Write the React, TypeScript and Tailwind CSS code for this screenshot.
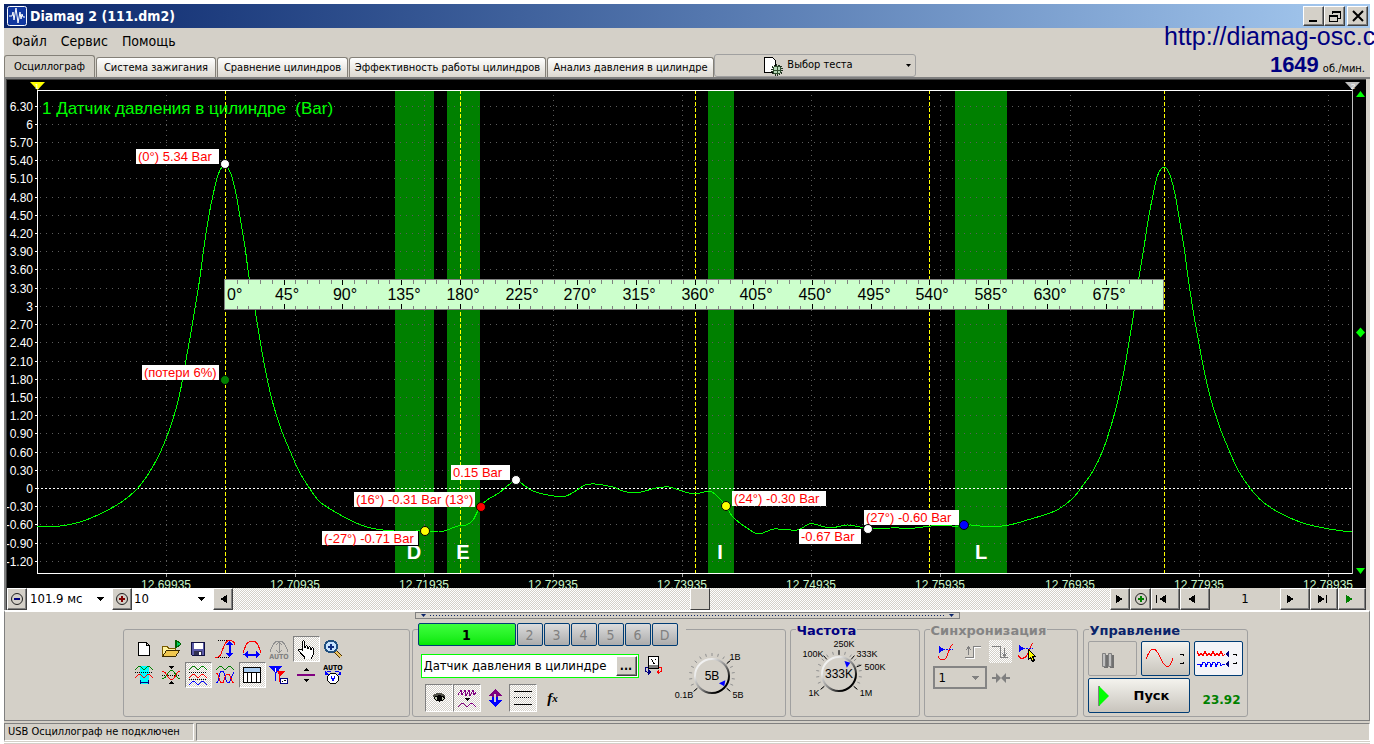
import React from 'react';
import clsx from 'clsx';

const UI_FONT = "font-['DejaVu_Sans_Condensed','DejaVu_Sans',sans-serif]";
const DITHER = 'bg-[repeating-conic-gradient(#ffffff_0_25%,#d4d0c8_0_50%)] bg-[length:2px_2px]';
const RAISED =
  'bg-[#d4d0c8] border border-t-white border-l-white border-r-[#404040] border-b-[#404040] shadow-[inset_-1px_-1px_0_#808080]';

/* ---------- chart data ---------- */

const ZERO_Y = 488;
const PX_PER_BAR = 60.7;
const LEFT = 37;
const RIGHT = 1352;
const TOP = 90;
const BOTTOM = 573;

const yTicks = Array.from({ length: 26 }, (_, i) => Math.round((6.3 - i * 0.3) * 100) / 100);
const xTicks = Array.from({ length: 10 }, (_, i) => ({
  x: Math.floor(166 + i * 129.15),
  label: (12.69935 + i * 0.01).toFixed(5),
}));
const bands = [
  { x: 395, w: 39, letter: 'D', lx: 414 },
  { x: 447, w: 33, letter: 'E', lx: 463 },
  { x: 708, w: 26, letter: 'I', lx: 720 },
  { x: 955, w: 52, letter: 'L', lx: 981 },
];
const strokes = [225, 460, 695, 929, 1164];

const notes = [
  { x: 136, y: 149, w: 83, text: '(0°) 5.34 Bar' },
  { x: 142, y: 365, w: 77, text: '(потери 6%)' },
  { x: 451, y: 465, w: 59, text: '0.15 Bar' },
  { x: 354, y: 492, w: 121, text: '(16°) -0.31 Bar (13°)' },
  { x: 322, y: 531, w: 96, text: '(-27°) -0.71 Bar', outlined: true },
  { x: 732, y: 491, w: 94, text: '(24°) -0.30 Bar' },
  { x: 799, y: 529, w: 62, text: '-0.67 Bar' },
  { x: 864, y: 510, w: 95, text: '(27°) -0.60 Bar' },
];

const dots = [
  { x: 225, y: 164, fill: '#ffffff' },
  { x: 225, y: 380, fill: '#008000' },
  { x: 516, y: 480, fill: '#ffffff' },
  { x: 481, y: 507, fill: '#ff0000' },
  { x: 425, y: 531, fill: '#ffff00' },
  { x: 726, y: 506, fill: '#ffff00' },
  { x: 868, y: 529, fill: '#ffffff' },
  { x: 964, y: 525, fill: '#0000ff' },
];

const trace: [number, number][] = [
  [37, 526], [60, 526], [80, 522], [100, 514], [120, 503], [135, 491], [147, 476], [157, 459], [166, 439],
  [173, 419], [179, 397], [183, 377], [186, 360], [191, 332], [196, 302], [200, 277], [204, 247], [209, 215],
  [213, 195], [218, 175], [222, 167], [225, 165], [228, 168], [232, 177], [236, 194], [240, 217], [245, 247],
  [249, 277], [255, 310], [260, 340], [265, 368], [272, 400], [281, 429], [290, 451], [299, 471], [310, 489],
  [320, 502], [337, 513], [354, 522], [371, 528], [394, 531], [423, 531], [439, 532], [447, 530], [458, 526],
  [466, 525], [473, 520], [480, 507], [487, 500], [499, 493], [506, 487], [516, 480], [521, 483], [533, 491],
  [554, 496], [566, 496], [577, 490], [585, 485], [595, 484], [613, 487], [623, 491], [635, 493], [645, 491],
  [656, 488], [669, 487], [682, 491], [695, 494], [709, 491], [716, 495], [726, 506], [733, 517], [747, 528],
  [759, 534], [774, 529], [797, 530], [809, 524], [818, 525], [830, 528], [847, 525], [860, 527], [868, 529],
  [891, 528], [915, 528], [931, 526], [959, 526], [971, 525], [990, 527], [1009, 525], [1024, 521],
  [1055, 511], [1072, 499], [1081, 488], [1093, 471], [1103, 450], [1111, 426], [1118, 400], [1126, 360],
  [1135, 305], [1139, 277], [1144, 247], [1149, 215], [1153, 195], [1157, 177], [1161, 169], [1164, 167],
  [1167, 169], [1171, 178], [1175, 194], [1179, 217], [1184, 247], [1188, 277], [1193, 310], [1198, 338],
  [1204, 370], [1211, 400], [1220, 428], [1229, 450], [1238, 470], [1250, 488], [1263, 502], [1280, 513],
  [1303, 523], [1329, 529], [1352, 532],
];

function smooth(p: [number, number][]) {
  let d = `M${p[0][0]} ${p[0][1]}`;
  for (let i = 0; i < p.length - 1; i++) {
    const a = p[Math.max(i - 1, 0)];
    const b = p[i];
    const c = p[i + 1];
    const e = p[Math.min(i + 2, p.length - 1)];
    d += `C${b[0] + (c[0] - a[0]) / 6} ${b[1] + (c[1] - a[1]) / 6} ${c[0] - (e[0] - b[0]) / 6} ${c[1] - (e[1] - b[1]) / 6} ${c[0]} ${c[1]}`;
  }
  return d;
}

function Chart() {
  return (
    <svg
      viewBox="7 80 1359 508"
      className="block w-full h-auto bg-black font-['Liberation_Sans',Arial,sans-serif]"
      role="img"
      aria-label="Датчик давления в цилиндре (Bar)"
    >
      {bands.map((b) => (
        <rect key={b.letter} x={b.x} y={TOP + 1} width={b.w} height={BOTTOM - TOP - 1} fill="#008000" />
      ))}

      {/* grid */}
      <g stroke="#5c5c5c" shapeRendering="crispEdges">
        {yTicks.filter((v) => v !== 0).map((v) => {
          const y = Math.round(ZERO_Y - v * PX_PER_BAR) + 0.5;
          return <line key={v} x1={LEFT + 3} x2={RIGHT} y1={y} y2={y} strokeDasharray="1 5" />;
        })}
        {xTicks.map((t) => (
          <line key={t.label} x1={t.x + 0.5} x2={t.x + 0.5} y1={TOP + 5} y2={BOTTOM} strokeDasharray="1 4" />
        ))}
      </g>

      {/* y scale */}
      {yTicks.map((v) => {
        const y = Math.round(ZERO_Y - v * PX_PER_BAR);
        return (
          <g key={v}>
            <text x={33} y={y + 5} fontSize={12} fill="#ffffff" textAnchor="end">
              {Number.isInteger(v) ? v : v.toFixed(2)}
            </text>
            <rect x={35} y={y} width={2} height={1} fill="#ffffff" />
          </g>
        );
      })}

      {/* x scale */}
      {xTicks.map((t) => (
        <g key={t.label}>
          <rect x={t.x} y={BOTTOM + 1} width={1} height={3} fill="#a0a0a0" />
          <text x={t.x} y={589} fontSize={12} fill="#c8f5c8" textAnchor="middle">
            {t.label}
          </text>
        </g>
      ))}

      <g shapeRendering="crispEdges">
        {strokes.map((x) => (
          <line key={x} x1={x + 0.5} x2={x + 0.5} y1={TOP} y2={BOTTOM} stroke="#ffff00" strokeDasharray="4 2" />
        ))}
        <line x1={LEFT} x2={RIGHT} y1={ZERO_Y + 0.5} y2={ZERO_Y + 0.5} stroke="#ffffff" strokeDasharray="2 2" />
        <path d={`M${LEFT + 0.5} ${BOTTOM + 0.5}V${TOP + 0.5}H${RIGHT}M${LEFT} ${BOTTOM + 0.5}H${RIGHT}`} stroke="#ffffff" fill="none" />
        <path d={`M${RIGHT + 0.5} ${TOP}V${BOTTOM + 1}`} stroke="#c0c0c0" />
        <path d={smooth(trace)} stroke="#00ff00" fill="none" />
      </g>

      <text x={42} y={114} fontSize={17} fill="#00ff00">
        {'1 Датчик давления в цилиндре\u00a0 (Bar)'}
      </text>

      {/* crank angle ruler */}
      <g shapeRendering="crispEdges">
        <rect x={224.5} y={279.5} width={939} height={30} fill="#ccffcc" stroke="#808080" />
        {Array.from({ length: 79 }, (_, i) => i + 1).map((i) => {
          const major = i % 5 === 0;
          const x = Math.round(225 + i * 11.74);
          return (
            <path
              key={i}
              d={major ? `M${x + 0.5} 280v5M${x + 0.5} 304v5` : `M${x + 0.5} 280v4M${x + 0.5} 306v3`}
              stroke={major ? '#000000' : '#808080'}
            />
          );
        })}
      </g>
      {Array.from({ length: 16 }, (_, i) => (
        <text
          key={i}
          x={i === 0 ? 227 : Math.round(228 + i * 58.7)}
          y={300}
          fontSize={16}
          fill="#000000"
          textAnchor={i === 0 ? 'start' : 'middle'}
        >
          {i * 45}°
        </text>
      ))}

      {bands.map((b) => (
        <text key={b.letter} x={b.lx} y={559} fontSize={20} fontWeight={700} fill="#ffffff" textAnchor="middle">
          {b.letter}
        </text>
      ))}

      {notes.map((n) => (
        <g key={n.text}>
          {n.outlined && <rect x={n.x} y={n.y} width={n.w + 1} height={15} fill="#000000" />}
          <rect x={n.x} y={n.y} width={n.w} height={n.outlined ? 14 : 15} fill="#ffffff" />
          <text x={n.x + 2} y={n.y + 12} fontSize={13} fill="#ff0000">
            {n.text}
          </text>
        </g>
      ))}
      {dots.map((d) => (
        <circle key={`${d.x}-${d.y}`} cx={d.x} cy={d.y} r={4.5} fill={d.fill} stroke="#000000" />
      ))}

      {/* markers */}
      <path d="M30 82H45L37.5 90z" fill="#ffff00" />
      <text x={37} y={89} fontSize={8} fill="#ffffff" textAnchor="middle">1</text>
      <path d="M1345 82H1360L1352.5 90z" fill="#c0c0c0" />
      <text x={1353} y={89} fontSize={8} fill="#ffffff" textAnchor="middle">2</text>
      <path d="M1356 97L1360.500 91L1365 97z" fill="#00ff00" />
      <path d="M1360.500 327.500L1365 332.500L1360.500 337.500L1356 332.500z" fill="#00ff00" />
      <path d="M1356 568H1365L1360.500 574z" fill="#00ff00" />
    </svg>
  );
}

/* ---------- icons, 20x20 pixel art ---------- */

function Ico({ children, size = 'w-5 h-5' }: { children: React.ReactNode; size?: string }) {
  return (
    <svg viewBox="0 0 20 20" className={clsx(size, 'shrink-0')} fill="none" shapeRendering="crispEdges">
      {children}
    </svg>
  );
}

const WAVE = 'c2 0 2-3 4.500-3s2.500 3 4.500 3 2-3 4.500-3 2.500 3 4.500 3';

const toolIcons: { label: string; on?: boolean; art: React.ReactNode }[] = [
  {
    label: 'Новый',
    art: <path d="M4.500 3.500h8l3 3v10h-11z M12.500 3.500v3h3" fill="#fff" stroke="#000" />,
  },
  {
    label: 'Открыть',
    art: (
      <>
        <path d="M1.500 17.500v-10h5l1 2h7v3" fill="#fff3a0" stroke="#7a5a00" />
        <path d="M1.500 17.500l4-6h13l-4 6z" fill="#f0c850" stroke="#3a2a00" />
        <path d="M14 1v8" stroke="#006000" />
        <path d="M15 1l5 4-5 4z" fill="#00d060" stroke="#006000" />
      </>
    ),
  },
  {
    label: 'Сохранить',
    art: (
      <>
        <path d="M3.500 3.500h13v13h-12l-1-1z" fill="#5a5aa8" stroke="#101040" />
        <rect x="6" y="4" width="9" height="6" fill="#fff" />
        <rect x="6" y="12" width="8" height="4" fill="#303050" />
        <rect x="11" y="13" width="2" height="3" fill="#fff" />
      </>
    ),
  },
  {
    label: 'Масштаб по вертикали',
    art: (
      <>
        <path d="M3 1.500h12M3 18.500h11" stroke="#000" strokeDasharray="1 1" />
        <path d="M0 18.500c6 0 6-4 8-9s3-8 6-8 5 1 6 4" stroke="#f00" />
        <path d="M14.500 4v13" stroke="#00f" strokeWidth="2" />
        <path d="M11 6l3.500-4 3.500 4zM11 14l3.500 4 3.500-4z" fill="#00f" />
      </>
    ),
  },
  {
    label: 'Масштаб по горизонтали',
    art: (
      <>
        <path d="M1.500 14v-3c2 0 1-9 8.500-9s6.500 9 8.500 9v3" stroke="#f00" />
        <path d="M3 15.500h14" stroke="#00f" strokeWidth="2" />
        <path d="M6 12l-4.500 3.500L6 19zM14 12l4.500 3.500L14 19z" fill="#00f" />
      </>
    ),
  },
  {
    label: 'Автомасштаб',
    art: (
      <>
        <path d="M1.500 13v-3c2 0 1-8 8.500-8s6.500 8 8.500 8v3M10 4v9M7 6l3-3 3 3M7 11l3 3 3-3" stroke="#909090" />
        <text x="10" y="20" fontSize="7" fontWeight="700" fill="#808080" textAnchor="middle" shapeRendering="auto">AUTO</text>
      </>
    ),
  },
  {
    label: 'Рука',
    on: true,
    art: (
      <path
        d="M6.500 11.500v-9l1-1 1 1v6h1v-1l1-1 1 1v2h1v-1l1-1 1 1v2h1v-1l1-1 1 1v6l-2 3v1.500h-7v-2l-3-3-3-3.500v-1.500h2z"
        fill="#fff"
        stroke="#000"
      />
    ),
  },
  {
    label: 'Лупа',
    art: (
      <>
        <path d="M12 12l6 6" stroke="#4a3000" strokeWidth="4" />
        <path d="M12 12l6 6" stroke="#e8c060" strokeWidth="2" />
        <circle cx="8" cy="7.500" r="6" fill="#c8e4ff" stroke="#205080" strokeWidth="2" />
        <path d="M8 4.500v6M5 7.500h6" stroke="#103080" strokeWidth="2" />
      </>
    ),
  },
  {
    label: 'Фильтр',
    art: (
      <>
        <rect x="6" y="1" width="9" height="18" fill="#0ff" />
        <path d={`M1 4.500${WAVE}`} stroke="#008000" />
        <path d="M1 7.500h18" stroke="#000" strokeDasharray="1 1" />
        <path d={`M1 12.500${WAVE}`} stroke="#f00" />
        <path d="M6 17.500h9M6.500 15v4M14.500 15v4" stroke="#000080" />
      </>
    ),
  },
  {
    label: 'Сжать',
    art: (
      <>
        <path d="M7 1h7l-3.500 3zM7 19h7l-3.500-3z" fill="#000" />
        <path d="M1 10.500h18" stroke="#000" strokeDasharray="1 1" />
        <path d="M1 13.500c5 1 5-8 9.500-8s4 9 8.500 8" stroke="#008000" />
        <path d="M1 6.500c5-1 5 8 9.500 8s4-9 8.500-8" stroke="#f00" />
      </>
    ),
  },
  {
    label: 'Раздельно',
    on: true,
    art: (
      <>
        <path d={`M1 4.500${WAVE}`} stroke="#008000" />
        <path d="M1 7.500h18M1 14.500h18" stroke="#000" strokeDasharray="1 1" />
        <path d={`M1 12.500${WAVE}`} stroke="#f00" />
        <path d={`M1 19.500${WAVE}`} stroke="#00f" />
      </>
    ),
  },
  {
    label: 'Вместе',
    art: (
      <>
        <path d={`M1 4.500${WAVE}`} stroke="#008000" />
        <path d="M1 18c4 0 2-12 6-12s3 12 6 12 3-7 6-11" stroke="#00f" />
        <path d="M1 8c3 0 3 10 6 10s2-9 6-9 2 9 6 9" stroke="#f00" />
      </>
    ),
  },
  {
    label: 'Таблица',
    on: true,
    art: (
      <>
        <rect x="1.500" y="2.500" width="17" height="15" fill="#fff" stroke="#000" />
        <rect x="2" y="3" width="16" height="4" fill="#a6caf0" />
        <path d="M1 7.500h18M5.500 7v10M9.500 7v10M14.500 7v10" stroke="#000" />
      </>
    ),
  },
  {
    label: 'Маркеры',
    art: (
      <>
        <path d="M0 1h13l-6 8z" fill="#00f" />
        <path d="M6.500 8v8" stroke="#00f" />
        <path d="M8 6h8l-5 6z" fill="#f00" />
        <path d="M10.500 10v7" stroke="#f00" />
        <path d="M5.500 3.500h1v3" stroke="#fff" />
        <rect x="11.500" y="13.500" width="7" height="5" fill="#fff" stroke="#000080" />
        <path d="M13 16.500h1M15 15.500h2" stroke="#000" />
      </>
    ),
  },
  {
    label: 'Линия нуля',
    art: (
      <>
        <path d="M7 6l3-3 3 3zM7 14l3 3 3-3z" fill="#000" />
        <rect x="1" y="9" width="18" height="2" fill="#800080" />
      </>
    ),
  },
  {
    label: 'Автоподбор',
    art: (
      <>
        <text x="10" y="5" fontSize="7" fontWeight="700" fill="#000" textAnchor="middle" shapeRendering="auto">AUTO</text>
        <path d="M3 7.500c4-2 10-2 14 0" stroke="#00f" />
        <path d="M2 6v4h4zM18 6v4h-4z" fill="#00f" />
        <circle cx="10" cy="13.500" r="5.500" fill="#fff" stroke="#000" />
        <path d="M8 11l2 5 2-5" stroke="#00f" />
      </>
    ),
  },
];

/* ---------- pieces ---------- */

function RowButton({ label, className, children }: { label: string; className: string; children: React.ReactNode }) {
  return (
    <button aria-label={label} className={clsx(RAISED, 'flex h-[22px] shrink-0 items-center justify-center', className)}>
      {children}
    </button>
  );
}

function Tri({ dir, fill = '#000000', bar = false }: { dir: 'l' | 'r'; fill?: string; bar?: boolean }) {
  return (
    <svg viewBox="0 0 12 10" className="w-3 h-[10px]" shapeRendering="crispEdges">
      {dir === 'l' ? <path d="M10 1v8L3 5z" fill={fill} /> : <path d="M2 1v8l7-4z" fill={fill} />}
      {bar && <rect x={dir === 'l' ? 0 : 10} y="1" width="1" height="8" fill={fill} />}
    </svg>
  );
}

function ZoomDot({ color, plus }: { color: string; plus?: boolean }) {
  return (
    <svg viewBox="0 0 14 14" className="w-[14px] h-[14px]">
      <circle cx="7" cy="7" r="5.500" fill="none" stroke="#202020" />
      <path d={plus ? 'M4 7h6M7 4v6' : 'M4 7h6'} stroke={color} strokeWidth="2" />
    </svg>
  );
}

function Combo({ label, value, className, text, box, arrow = '#000000' }: {
  label: string;
  value: string;
  className: string;
  text: string;
  box: string;
  arrow?: string;
}) {
  return (
    <label className={clsx('relative flex shrink-0 items-center', className)}>
      <select aria-label={label} className={clsx('h-full w-full appearance-none outline-none', text, box)}>
        <option>{value}</option>
      </select>
      <svg viewBox="0 0 7 4" className="pointer-events-none absolute right-2 h-1 w-[7px]" shapeRendering="crispEdges">
        <path d="M0 0h7L3.500 4z" fill={arrow} />
      </svg>
    </label>
  );
}

function Group({ title, titleClass, className, children }: {
  title: string;
  titleClass: string;
  className: string;
  children: React.ReactNode;
}) {
  return (
    <fieldset className={clsx('min-w-0 shrink-0 rounded-[3px] border border-[#a0a0a0]', className)}>
      <legend className={clsx("ml-[5px] h-[14px] px-px font-['DejaVu_Sans',sans-serif] text-[13px] leading-[17px] font-bold", titleClass)}>
        {title}
      </legend>
      {children}
    </fieldset>
  );
}

interface KnobLabel {
  x: number;
  y: number;
  text: string;
}

function Knob({ cx, cy, r, value, labels, major, pointer, className, viewBox }: {
  cx: number;
  cy: number;
  r: number;
  value: string;
  labels: KnobLabel[];
  major: number[];
  pointer: number;
  className: string;
  viewBox: string;
}) {
  const at = (deg: number, rad: number) => {
    const a = (deg * Math.PI) / 180;
    return `${(cx + Math.sin(a) * rad).toFixed(1)} ${(cy - Math.cos(a) * rad).toFixed(1)}`;
  };
  const minor = Array.from({ length: 17 }, (_, i) => -130 + i * 16.25);
  return (
    <svg viewBox={viewBox} className={clsx(className, "shrink-0 font-['Liberation_Sans',Arial,sans-serif]")} role="img" aria-label={value}>
      <defs>
        <linearGradient id="rim" x1="0" y1="0" x2="1" y2="1">
          <stop offset="0" stopColor="#ffffff" />
          <stop offset="0.25" stopColor="#e8e8e8" />
          <stop offset="0.55" stopColor="#808080" />
          <stop offset="0.8" stopColor="#000000" />
        </linearGradient>
      </defs>
      {minor.map((d) => (
        <path key={d} d={`M${at(d, r + 2)}L${at(d, r + 5)}`} stroke="#909090" />
      ))}
      {major.map((d) => (
        <path key={d} d={`M${at(d, r + 1)}L${at(d, r + 6)}`} stroke="#000000" />
      ))}
      <circle cx={cx} cy={cy} r={r - 1} fill="#d4d0c8" stroke="url(#rim)" strokeWidth="2" />
      <path d={`M${at(pointer, r - 2)}L${at(pointer - 22, r - 4)}L${at(pointer + 6, r - 8)}z`} fill="#0000ff" />
      <text x={cx} y={cy + 4} fontSize={12} fill="#000000" textAnchor="middle">{value}</text>
      {labels.map((l) => (
        <text key={l.text} x={l.x} y={l.y} fontSize={9} fill="#000000" textAnchor="middle">{l.text}</text>
      ))}
    </svg>
  );
}

const tabs = [
  { title: 'Осциллограф', w: 'w-[91px]' },
  { title: 'Система зажигания', w: 'w-[120px]' },
  { title: 'Сравнение цилиндров', w: 'w-[131px]' },
  { title: 'Эффективность работы цилиндров', w: 'w-[197px]' },
  { title: 'Анализ давления в цилиндре', w: 'w-[167px]' },
];

function TitleBar() {
  return (
    <header className="flex h-6 items-center bg-linear-to-r from-[#0a246a] to-[#a6caf0] pl-[3px] pr-[2px]">
      <svg viewBox="0 0 20 20" className="h-5 w-5">
        <rect x="0.500" y="0.500" width="19" height="19" rx="2" fill="#1238a0" stroke="#ffffff" />
        <path d="M2 10h3l1-4 1 8 2-12 2 15 2-11 1 7 1-5 1 3h2" fill="none" stroke="#ffffff" />
      </svg>
      <h1 className="ml-[3px] flex-1 text-[14px] leading-5 font-bold text-white">Diamag 2 (111.dm2)</h1>
      <button aria-label="Свернуть" className={clsx(RAISED, 'flex h-5 w-[21px] items-center justify-center')}>
        <svg viewBox="0 0 14 14" className="h-[14px] w-[14px]"><path d="M2 11h8v2H2z" fill="#000" /></svg>
      </button>
      <button aria-label="Восстановить" className={clsx(RAISED, 'flex h-5 w-[21px] items-center justify-center')}>
        <svg viewBox="0 0 14 14" className="h-[14px] w-[14px]" fill="none" stroke="#000" shapeRendering="crispEdges">
          <path d="M4.500 5V2.500h8V9H10M4 3h9M1.500 6.500h8v6h-8zM1 7h9" />
        </svg>
      </button>
      <button aria-label="Закрыть" className={clsx(RAISED, 'ml-[2px] flex h-5 w-[21px] items-center justify-center')}>
        <svg viewBox="0 0 14 14" className="h-[14px] w-[14px]"><path d="M2 2l10 10M12 2L2 12" stroke="#000" strokeWidth="2" /></svg>
      </button>
    </header>
  );
}

function TabRow() {
  return (
    <div className="flex h-[23px] items-end">
      <div role="tablist" className="flex items-end gap-px">
        {tabs.map((t, i) => (
          <button
            key={t.title}
            role="tab"
            aria-selected={i === 0}
            className={clsx(
              'shrink-0 whitespace-nowrap rounded-t-[3px] border border-b-0 border-[#848078] text-[11px] leading-[18px]',
              t.w,
              i === 0 ? 'h-[22px] bg-[#d4d0c8]' : 'h-5 bg-linear-to-b from-white to-[#dcd8d0]',
            )}
          >
            {t.title}
          </button>
        ))}
      </div>
      <button className="relative flex h-[23px] w-[202px] shrink-0 items-center justify-center gap-1 rounded-[3px] border border-[#a0a0a0] pr-[14px] text-[11px]">
        <Ico>
          <path d="M1.500 1.500h8l3 3v12h-11z" fill="#fff" stroke="#000" />
          <circle cx="14" cy="14" r="4.500" fill="none" stroke="#203020" strokeWidth="3" strokeDasharray="1 1" />
          <circle cx="14" cy="14" r="4" fill="#b8d8b8" stroke="#305030" />
          <path d="M14 11v6M11 14h6" stroke="#305030" />
        </Ico>
        Выбор теста
        <svg viewBox="0 0 5 3" className="absolute right-1 h-[3px] w-[5px]"><path d="M0 0h5L2.500 3z" fill="#000" /></svg>
      </button>
      <div className="ml-auto flex items-baseline gap-1 whitespace-nowrap pr-[5px]">
        <span className="font-['Liberation_Sans',Arial,sans-serif] text-[22px] leading-6 font-bold text-[#000080]">1649</span>
        <span className="text-[11px]">об./мин.</span>
      </div>
    </div>
  );
}

function TimeRow() {
  return (
    <div className="flex h-[22px] bg-[#d4d0c8]">
      <RowButton label="Уменьшить" className="w-5"><ZoomDot color="#000080" /></RowButton>
      <Combo label="Длительность" value="101.9 мс" className="w-[85px]" text="pl-[3px] text-[13px]" box="bg-white" />
      <RowButton label="Увеличить" className="w-5"><ZoomDot color="#800000" plus /></RowButton>
      <Combo label="Множитель" value="10" className="w-[81px]" text="pl-[2px] text-[13px]" box="bg-white" />
      <RowButton label="Влево" className="w-5"><Tri dir="l" /></RowButton>
      <input
        type="range"
        aria-label="Прокрутка"
        min={0}
        max={1000}
        defaultValue={533}
        className={clsx(
          DITHER,
          'h-[22px] min-w-0 flex-1 appearance-none rounded-none outline-none',
          '[&::-webkit-slider-thumb]:h-[22px] [&::-webkit-slider-thumb]:w-5 [&::-webkit-slider-thumb]:appearance-none [&::-webkit-slider-thumb]:rounded-none [&::-webkit-slider-thumb]:border [&::-webkit-slider-thumb]:border-t-white [&::-webkit-slider-thumb]:border-l-white [&::-webkit-slider-thumb]:border-r-[#404040] [&::-webkit-slider-thumb]:border-b-[#404040] [&::-webkit-slider-thumb]:bg-[#d4d0c8]',
        )}
      />
      <RowButton label="Вправо" className="w-5"><Tri dir="r" /></RowButton>
      <RowButton label="Добавить" className="w-[21px]"><ZoomDot color="#008000" plus /></RowButton>
      <RowButton label="В начало" className="w-[29px] pr-2"><Tri dir="l" bar /></RowButton>
      <RowButton label="Назад" className="w-[30px] pr-2"><Tri dir="l" /></RowButton>
      <span className="w-[70px] shrink-0 text-center text-[13px] leading-[22px]">1</span>
      <RowButton label="Вперёд" className="w-[30px] pr-2"><Tri dir="r" /></RowButton>
      <RowButton label="В конец" className="w-[28px] pr-1"><Tri dir="r" bar /></RowButton>
      <RowButton label="Воспроизвести" className="w-[28px] pr-1"><Tri dir="r" fill="#008000" /></RowButton>
    </div>
  );
}

function Tools() {
  return (
    <section className="mt-[7px] w-[287px] shrink-0 rounded-[3px] border border-[#a0a0a0] pl-[7px] pt-[6px]">
      <div className="grid w-[216px] grid-cols-8">
        {toolIcons.map((t) => (
          <button
            key={t.label}
            aria-label={t.label}
            className={clsx(
              'flex h-[26px] items-center justify-center border',
              t.on ? 'border-t-[#808080] border-l-[#808080] border-r-white border-b-white' : 'border-transparent',
              t.on && DITHER,
            )}
          >
            <Ico>{t.art}</Ico>
          </button>
        ))}
      </div>
    </section>
  );
}

const PRESSED = 'border border-t-[#808080] border-l-[#808080] border-r-white border-b-white';

function Channel() {
  return (
    <section className="mt-[7px] ml-[2px] flex w-[374px] shrink-0 rounded-[3px] border border-[#a0a0a0] pl-[5px]">
      <div className="w-[268px] shrink-0">
        <div className="-mt-[7px] flex gap-px bg-[#d4d0c8]">
          <button className="h-[23px] w-[98px] rounded-[2px] border border-[#003c74] bg-linear-to-b from-[#3cff3c] to-[#00e800] text-[14px] leading-5 font-bold">1</button>
          {['2', '3', '4', '5', '6', 'D'].map((n) => (
            <button key={n} className="h-[23px] w-[26px] rounded-[2px] border border-[#003c74] bg-linear-to-b from-[#dcdcdc] to-[#acacac] text-[14px] leading-5 text-[#808080]">
              {n}
            </button>
          ))}
        </div>
        <div className="mt-2 ml-[3px] flex items-center gap-[5px]">
          <div className="flex h-6 w-[218px] items-center border border-[#00ff00] bg-white pr-px">
            <input aria-label="Датчик" defaultValue="Датчик давления в цилиндре" className="min-w-0 flex-1 pl-[2px] text-[13px] outline-none" />
            <button aria-label="Выбрать датчик" className={clsx(RAISED, 'h-5 w-[21px] shrink-0 text-[12px] leading-3 font-bold')}>...</button>
          </div>
          <button aria-label="Обновить датчик">
            <Ico>
              <rect x="4.500" y="0.500" width="10" height="12" fill="#fff" stroke="#000" />
              <rect x="5" y="9" width="9" height="3" fill="#808080" />
              <path d="M7 3h1M11 3h1M8 4l2 4 1-1" stroke="#000" />
              <path d="M4 11c-4 0-4 5 1 5.500" stroke="#000080" />
              <path d="M4 13v6l3-3z" fill="#000080" />
              <path d="M15 11c4 0 4 5-1 5.500" stroke="#f00" />
              <path d="M15 13v6l-3-3z" fill="#f00" />
            </Ico>
          </button>
        </div>
        <div className="mt-[6px] ml-[7px] flex">
          <button aria-label="Показать" className={clsx(PRESSED, DITHER, 'flex h-7 w-7 items-center justify-center')}>
            <Ico>
              <path d="M4 8c2-4 8-4 12-1v2H4z" fill="#505048" />
              <path d="M5 10c2-3 8-3 11 0-3 4-8 4-11 0z" fill="#c0c8b0" stroke="#000" />
              <circle cx="10.500" cy="10.500" r="2.500" fill="#000" />
            </Ico>
          </button>
          <button aria-label="Сглаживание" className={clsx(PRESSED, DITHER, 'flex h-7 w-7 items-center justify-center')}>
            <Ico>
              <path d="M1 7l3-5 1 5 3-5 1 6 3-6 1 6 3-6 1 5 2-3" stroke="#800080" />
              <path d="M7 10h6l-3 3z" fill="#000" />
              <path d="M1 18.500c2 0 2-3 4.500-3s2.500 3 4.500 3 2-3 4.500-3 2.500 3 4.500 3" stroke="#800080" />
            </Ico>
          </button>
          <button aria-label="Инверсия" className="flex h-7 w-7 items-center justify-center">
            <Ico>
              <path d="M10 1l7 7h-4v3H7V8H3z" fill="#800080" />
              <path d="M10 19l7-7h-4V9H7v3H3z" fill="#0000ff" />
              <path d="M10 6v8" stroke="#d4d0c8" strokeWidth="2" />
            </Ico>
          </button>
          <button aria-label="Уровни" className={clsx(PRESSED, DITHER, 'flex h-7 w-7 items-center justify-center')}>
            <Ico>
              <path d="M1 3.500h18M1 16.500h18" stroke="#000" />
              <path d="M1 9.500h18" stroke="#000" strokeDasharray="1 1" />
            </Ico>
          </button>
          <button aria-label="Формула" className="flex h-7 w-8 items-center justify-center font-['Liberation_Serif',serif] text-[15px] leading-4 font-bold italic">
            f<span className="text-[11px]">x</span>
          </button>
        </div>
      </div>
      <Knob
        className="-ml-4 mt-[14px] h-[64px] w-[80px]"
        viewBox="670 644 80 64"
        cx={712}
        cy={676}
        r={18}
        value="5В"
        major={[50, 130, -130]}
        pointer={130}
        labels={[
          { x: 735, y: 660, text: '1В' },
          { x: 684, y: 698, text: '0.1В' },
          { x: 738, y: 698, text: '5В' },
        ]}
      />
    </section>
  );
}

function Sync() {
  return (
    <Group title="Синхронизация" titleClass="text-[#848484]" className="ml-1 w-[154px]">
      <div className="ml-[10px] mt-1 flex gap-1">
        <button aria-label="Уровень" className="flex h-[23px] w-[23px] items-center justify-center">
          <Ico>
            <path d="M2 14c2 5 7 5 9 0s3-10 6-12" stroke="#f00" />
            <path d="M3 4v7l5-3.500z" fill="#00f" />
            <path d="M7 7.500h10" stroke="#00f" strokeDasharray="2 1" />
          </Ico>
        </button>
        <button aria-label="По фронту" className="flex h-[23px] w-[23px] items-center justify-center">
          <Ico>
            <path d="M3 16.500h8v-11h7" stroke="#fff" />
            <path d="M2 15.500h8v-11h8M5.500 13V6M3 8l2.500-3L8 8" stroke="#808080" />
          </Ico>
        </button>
        <button aria-label="По спаду" className={clsx(DITHER, 'flex h-[23px] w-[23px] items-center justify-center')}>
          <Ico>
            <path d="M2 4.500h8v11h8M14.500 6v7M12 11l2.500 3 2.500-3" stroke="#808080" />
          </Ico>
        </button>
        <button aria-label="Выбор уровня" className="flex h-[23px] w-[23px] items-center justify-center">
          <Ico>
            <path d="M1 13c2 5 7 4 9 0s3-9 6-12" stroke="#f00" />
            <path d="M2 3v7l5-3.500z" fill="#00f" />
            <path d="M6 6.500h10" stroke="#00f" strokeDasharray="2 1" />
            <path d="M11.500 7.500v10l2-2 2 4 2-1-2-4h3z" fill="#ff0" stroke="#000" />
          </Ico>
        </button>
      </div>
      <div className="ml-2 mt-[3px] flex items-center gap-1">
        <Combo label="Канал" value="1" className="h-[23px] w-[54px]" text="pl-1 text-[13px]" box="border-2 border-[#848484] bg-[#d4d0c8]" arrow="#808080" />
        <svg viewBox="0 0 20 12" className="h-3 w-5">
          <path d="M1 5h4V1l5 5-5 5V7H1zM19 5h-4V1l-5 5 5 5V7h4z" fill="#808080" />
        </svg>
      </div>
    </Group>
  );
}

function Control() {
  return (
    <Group title="Управление" titleClass="text-[#0a246a]" className="ml-[5px] w-[165px]">
      <div className="ml-1 mt-[5px] grid w-[155px] grid-cols-3 gap-x-1 gap-y-[2px]">
        <button aria-label="Пауза" className="flex h-[35px] items-center justify-center rounded-[2px] border border-[#a0a0a0]">
          <svg viewBox="0 0 14 18" className="mt-1 mr-2 h-[18px] w-[14px]">
            <path d="M3 3h4v13H3zM9 3h4v13H9z" fill="#707070" />
            <path d="M1.500 1.500h3v13h-3zM7.500 1.500h3v13h-3z" fill="#c0c0c0" stroke="#808080" />
          </svg>
        </button>
        <button aria-label="Синус" className="flex h-[35px] items-center justify-center rounded-[2px] border border-[#003c74] bg-linear-to-b from-[#f4f3ee] to-[#c8c4bc]">
          <svg viewBox="0 0 42 24" className="h-6 w-[42px]" fill="none" shapeRendering="crispEdges">
            <path d="M2 12C7-1 11-1 16 10s9 14 13 1" stroke="#f00" />
            <path d="M36 7.500h3.500V9M36 16.500h3.500V15" stroke="#000" />
          </svg>
        </button>
        <button aria-label="Два сигнала" className="flex h-[35px] items-center justify-center rounded-[2px] border border-[#003c74] bg-[#f4f4f8]">
          <svg viewBox="0 0 42 24" className="h-6 w-[42px]" fill="none" shapeRendering="crispEdges">
            <path d="M0 4l2 5 2-3 2 3 2-5 2 5 2-3 2 3 2-5 2 5 2-3 2 3 2-5 2 5 2-2" stroke="#f00" />
            <path d="M0 17h3l1 3 2-5 2 1 1 4 2-5 2 1 1 4 2-5 2 1 1 4 2-5 2 1 1 3 2-2h2" stroke="#00f" />
            <path d="M32 4v6l-4-3zM32 14v6l-4-3z" fill="#000080" />
            <path d="M36 7.500h3.500V9M36 16.500h3.500V15" stroke="#000" />
          </svg>
        </button>
        <button className="col-span-2 flex h-[35px] items-center rounded-[2px] border border-[#003c74] bg-linear-to-b from-[#f4f3ee] to-[#c8c4bc] pl-[9px] font-['DejaVu_Sans',sans-serif] text-[13px] font-bold">
          <svg viewBox="0 0 12 20" className="h-5 w-3">
            <path d="M1 0v20" stroke="#808080" strokeWidth="2" />
            <path d="M1 0l10 10L1 20z" fill="#00ff00" />
          </svg>
          <span className="ml-[24px]">Пуск</span>
        </button>
        <span className="pt-[14px] pr-[2px] text-right font-['DejaVu_Sans',sans-serif] text-[12px] leading-4 font-bold text-[#008000]">23.92</span>
      </div>
    </Group>
  );
}

function Splitter() {
  return (
    <div className="mx-auto flex h-[7px] w-[545px] items-center gap-1 border border-[#808080] px-[5px]">
      <svg viewBox="0 0 5 3" className="h-[3px] w-[5px]"><path d="M0 0h5L2.500 3z" fill="#0a246a" /></svg>
      <div className="h-px flex-1 bg-[repeating-linear-gradient(90deg,#0a246a_0_1px,transparent_1px_3px)]" />
      <svg viewBox="0 0 5 3" className="h-[3px] w-[5px]"><path d="M0 0h5L2.500 3z" fill="#0a246a" /></svg>
    </div>
  );
}

export default function App() {
  return (
    <div className={clsx(UI_FONT, 'min-h-screen overflow-hidden bg-white px-1 pt-1 text-black')}>
      <div className="relative bg-[#d4d0c8]">
        <TitleBar />
        <nav className="flex h-[26px] items-center gap-[14px] pl-2 text-[14px]">
          <a href="#file">Файл</a>
          <a href="#service">Сервис</a>
          <a href="#help">Помощь</a>
        </nav>
        {/* site address runs over the title bar and off the right edge */}
        <a
          href="#site"
          className="absolute top-[18px] right-0 w-[206px] whitespace-nowrap font-['Liberation_Sans',Arial,sans-serif] text-[25px] leading-7 text-[#000080]"
        >
          http://diamag-osc.com
        </a>
        <TabRow />

        <main>
          <div className="border-t-2 border-l-2 border-[#808080] pr-1">
            <div className="border-t border-l border-[#404040]">
              <Chart />
              <TimeRow />
            </div>
          </div>

          <div className="border-t-2 border-b border-l border-r border-t-white border-b-[#808080] border-l-[#808080] border-r-[#808080] pb-[3px]">
            <Splitter />
            <div className="mt-[3px] flex justify-center pr-1">
              <Tools />
              <Channel />
              <Group title="Частота" titleClass="text-[#000080]" className="ml-1 h-[95px] w-[130px]">
                <Knob
                  className="ml-[9px] h-[70px] w-[90px]"
                  viewBox="800 636 90 70"
                  cx={839}
                  cy={674}
                  r={18}
                  value="333K"
                  major={[0, -40, 40, 68, 130, -130]}
                  pointer={45}
                  labels={[
                    { x: 844, y: 647, text: '250K' },
                    { x: 813, y: 657, text: '100K' },
                    { x: 867, y: 657, text: '333K' },
                    { x: 875, y: 670, text: '500K' },
                    { x: 814, y: 696, text: '1K' },
                    { x: 866, y: 696, text: '1M' },
                  ]}
                />
              </Group>
              <Sync />
              <Control />
            </div>
          </div>
        </main>

        <footer className="flex gap-[2px] border-b border-[#d4d0c8] pt-[2px] text-[11px] leading-4">
          <div className="h-[18px] w-[190px] whitespace-nowrap border border-t-[#808080] border-l-[#808080] border-r-white border-b-white pl-[3px]">
            USB Осциллограф не подключен
          </div>
          <div className="flex-1 border border-t-[#808080] border-l-[#808080] border-r-white border-b-white" />
        </footer>
        <div className="h-[3px] border-t border-white" />
      </div>
    </div>
  );
}
